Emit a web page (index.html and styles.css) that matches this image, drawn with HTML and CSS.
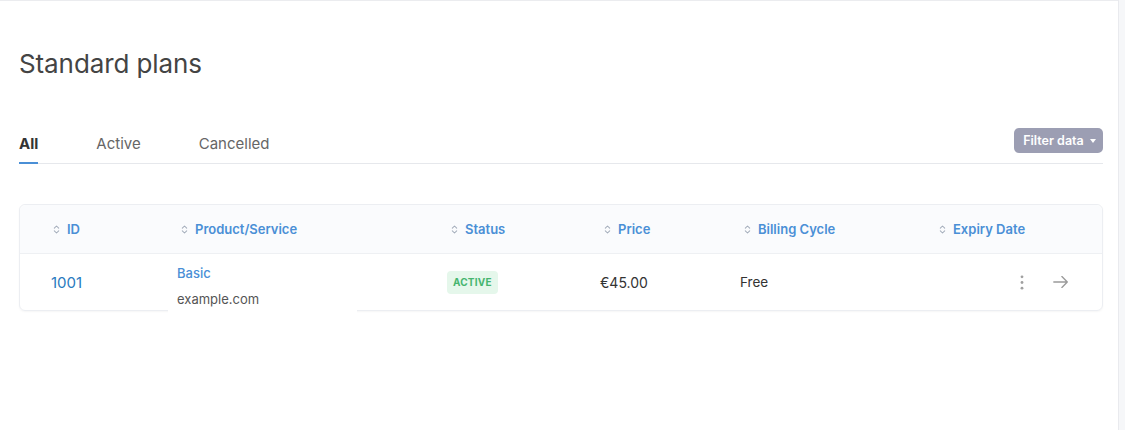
FILE: index.html
```html
<!DOCTYPE html>
<html>
<head>
<meta charset="utf-8">
<link rel="stylesheet" href="styles.css">
</head>
<body>
<div class="shell">
  <main class="page">
    <h1 class="title">Standard plans</h1>
    <div class="tabbar">
      <nav class="tabs">
        <a class="tab active">All</a>
        <a class="tab">Active</a>
        <a class="tab">Cancelled</a>
      </nav>
      <button class="filter">Filter data <span class="caret"></span></button>
    </div>
    <div class="card">
      <div class="row head">
        <div class="th th-id"><svg class="sort" viewBox="0 0 8 12"><path d="M1.5 4.5 4 2l2.5 2.5M1.5 7.5 4 10l2.5-2.5"/></svg>ID</div>
        <div class="th"><svg class="sort" viewBox="0 0 8 12"><path d="M1.5 4.5 4 2l2.5 2.5M1.5 7.5 4 10l2.5-2.5"/></svg>Product/Service</div>
        <div class="th"><svg class="sort" viewBox="0 0 8 12"><path d="M1.5 4.5 4 2l2.5 2.5M1.5 7.5 4 10l2.5-2.5"/></svg>Status</div>
        <div class="th"><svg class="sort" viewBox="0 0 8 12"><path d="M1.5 4.5 4 2l2.5 2.5M1.5 7.5 4 10l2.5-2.5"/></svg>Price</div>
        <div class="th"><svg class="sort" viewBox="0 0 8 12"><path d="M1.5 4.5 4 2l2.5 2.5M1.5 7.5 4 10l2.5-2.5"/></svg>Billing Cycle</div>
        <div class="th"><svg class="sort" viewBox="0 0 8 12"><path d="M1.5 4.5 4 2l2.5 2.5M1.5 7.5 4 10l2.5-2.5"/></svg>Expiry Date</div>
      </div>
      <div class="row body">
        <div class="td id">1001</div>
        <div class="td product">
          <a class="pname">Basic</a>
          <span class="domain">example.com</span>
        </div>
        <div class="td"><span class="badge">ACTIVE</span></div>
        <div class="td price">€45.00</div>
        <div class="td cycle">Free</div>
        <div class="td actions">
          <svg class="kebab" viewBox="0 0 6 18"><circle cx="3" cy="3" r="1.5"/><circle cx="3" cy="9" r="1.5"/><circle cx="3" cy="15" r="1.5"/></svg>
          <svg class="arrow" viewBox="0 0 20 16"><path d="M2 8h15M11 2l6 6-6 6"/></svg>
        </div>
      </div>
    </div>
  </main>
  <aside class="edge"></aside>
</div>
</body>
</html>
```
FILE: styles.css
```css
* { box-sizing: border-box; }
html, body { margin: 0; padding: 0; background: #fff; }
body { font-family: Inter, "Noto Sans", sans-serif; color: #333; width: 1125px; height: 430px; overflow: hidden; }
.shell { display: flex; height: 430px; }
.page { width: 1118px; border-top: 1px solid #ebecef; padding: 0 15px 0 19px; }
.edge { flex: 1; background: #f6f7f9; border-left: 1px solid #e9eaee; }
.title { margin: 46px 0 0; font-size: 26px; font-weight: 400; color: #444; line-height: 34px; letter-spacing: -0.1px; }
.tabbar { margin-top: 47px; display: flex; justify-content: space-between; align-items: flex-end; border-bottom: 1px solid #e6e8ec; }
.tabs { display: flex; }
.tab { font-size: 15px; color: #666; padding: 0 0 8px; line-height: 20px; border-bottom: 2px solid transparent; margin-bottom: -1px; margin-right: 58px; }
.tab.active { color: #333; font-weight: 700; border-bottom-color: #4a8fd6; }
.filter { margin-bottom: 10px; height: 25px; width: 89px; border: 0; border-radius: 5px; background: #9c9eb3; color: #fff; font-family: inherit; font-size: 12.5px; font-weight: 600; display: flex; align-items: center; justify-content: center; gap: 6px; padding: 0 0 0 2px; }
.caret { width: 0; height: 0; border-left: 3.5px solid transparent; border-right: 3.5px solid transparent; border-top: 4px solid #fff; }
.card { margin-top: 40px; border: 1px solid #eceef2; border-radius: 6px; box-shadow: 0 1px 2px rgba(0,0,0,0.04); }
.row { display: grid; grid-template-columns: 126px 270px 153px 140px 195px 1fr; padding-left: 31px; }
.head { height: 49px; background: #fafbfd; border-bottom: 1px solid #eef0f3; border-radius: 6px 6px 0 0; align-items: center; }
.th { display: flex; align-items: center; gap: 7px; font-size: 13px; font-weight: 600; color: #4a8fd6; padding-left: 4px; }
.th-id { padding-left: 2px; }
.sort { width: 7px; height: 11px; fill: none; stroke: #a4adbb; stroke-width: 1.2; stroke-linecap: round; stroke-linejoin: round; }
.body { height: 56px; align-items: center; }
.td { font-size: 14px; }
.id { font-size: 15px; color: #2a7bc0; }
.product { align-self: stretch; position: relative; display: flex; flex-direction: column; padding-top: 10px; }
.product::after { content: ""; position: absolute; left: -9px; width: 189px; bottom: -4px; height: 6px; background: #fff; }
.pname { font-size: 13px; color: #4a8fd6; font-weight: 500; line-height: 18px; }
.domain { font-size: 13px; color: #555; line-height: 18px; margin-top: 8px; }
.badge { display: inline-block; background: #e5f7eb; color: #46b56f; font-size: 10px; font-weight: 700; padding: 0 6px; line-height: 23px; border-radius: 4px; letter-spacing: 0.2px; }
.price { color: #333; }
.cycle { color: #333; font-size: 13.5px; }
.actions { display: flex; justify-content: flex-end; align-items: center; padding-right: 32px; gap: 27px; }
.kebab { width: 6px; height: 17px; fill: #a0a0a0; }
.arrow { width: 18px; height: 16px; fill: none; stroke: #9a9a9a; stroke-width: 1.5; stroke-linecap: round; stroke-linejoin: round; }
```
